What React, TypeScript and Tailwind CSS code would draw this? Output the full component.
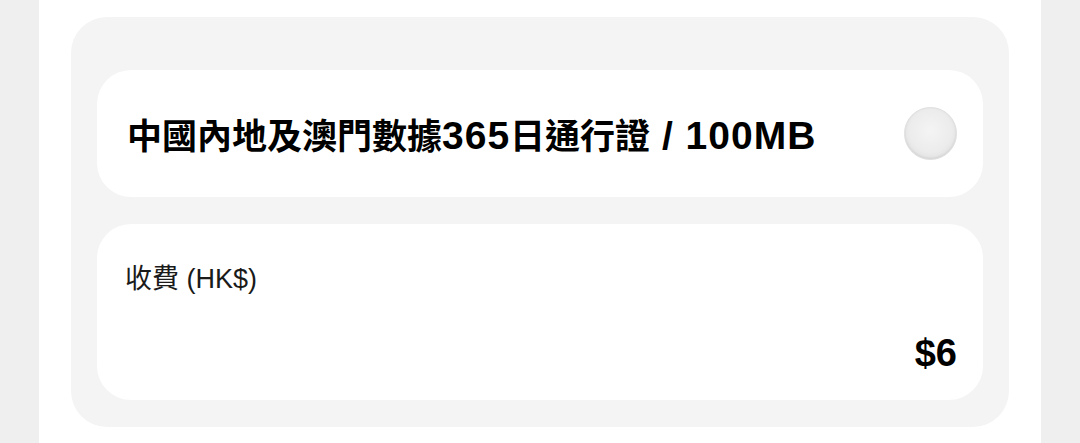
export default function App() {
  return (
    <div
      className="flex h-[443px] w-[1080px] overflow-hidden bg-[#efefef]"
      style={{ fontFamily: '"Liberation Sans", "Noto Sans CJK TC", sans-serif' }}
    >
      <div className="w-[39px] shrink-0" />
      <div className="flex-1 bg-white px-[32px] pt-[17px]">
        <div className="flex flex-col gap-[27px] rounded-[36px] bg-[#f4f4f4] px-[26px] pb-[27px] pt-[53px]">
          <div className="flex h-[127px] items-center justify-between rounded-[34px] bg-white pl-[30px] pr-[26px]">
            <span className="pt-[4px] text-[39px] font-bold leading-none tracking-[1px] text-black">
              <span className="text-[35px] tracking-normal">中國內地及澳門數據</span>
              365
              <span className="text-[35px] tracking-normal">日通行證</span>
              {" / 100MB"}
            </span>
            <span className="h-[53px] w-[53px] rounded-full border border-[#dedede] bg-[radial-gradient(circle_at_50%_45%,#f4f4f4_0%,#ececec_55%,#d6d6d6_100%)] shadow-[inset_0_-1px_2px_rgba(0,0,0,0.08)]" />
          </div>
          <div className="flex h-[176px] flex-col rounded-[34px] bg-white pl-[28px] pr-[26px] pt-[42px]">
            <span className="text-[27px] leading-none text-[#1a1a1a]">收費 (HK$)</span>
            <span className="mt-[41px] self-end text-[38px] font-bold leading-none text-black">$6</span>
          </div>
        </div>
      </div>
      <div className="w-[39px] shrink-0" />
    </div>
  );
}
